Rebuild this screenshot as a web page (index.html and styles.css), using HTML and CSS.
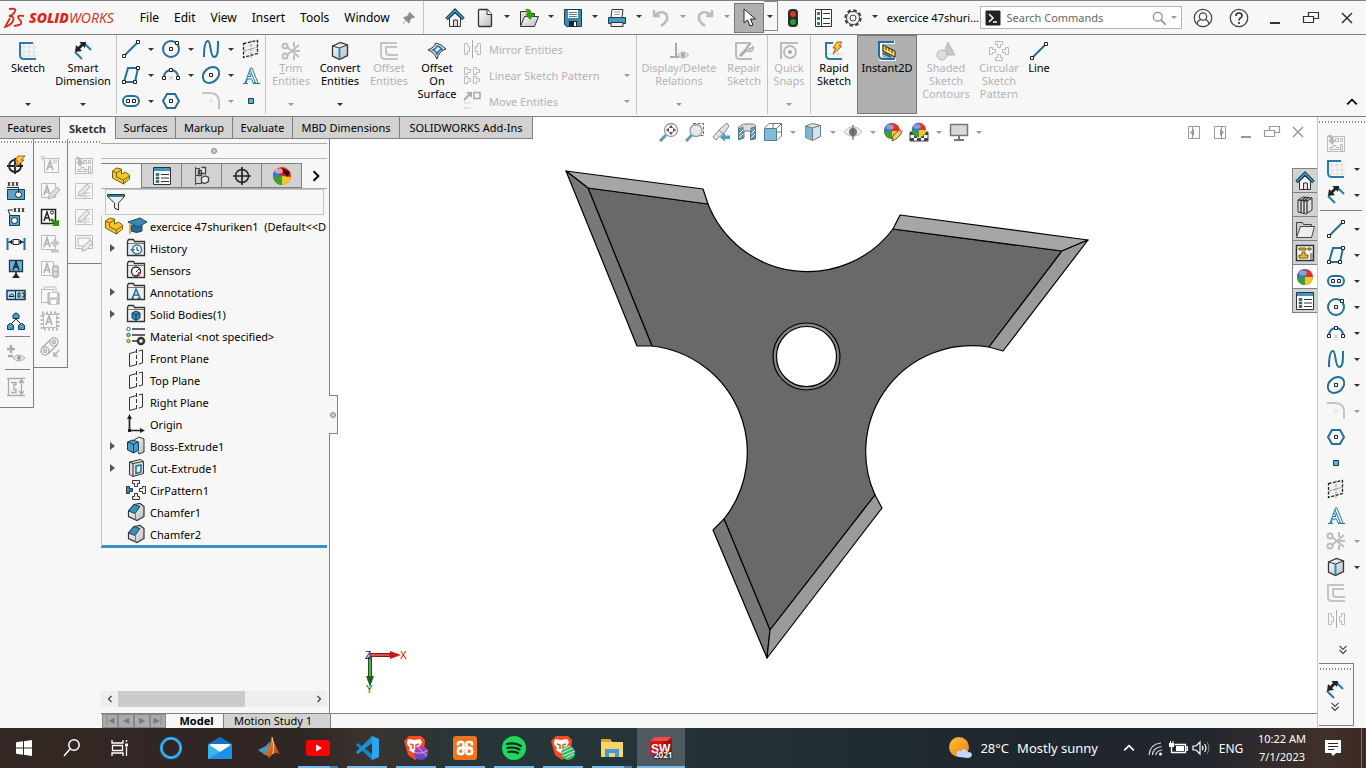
FILE: index.html
```html
<!DOCTYPE html>
<html lang="en">
<head>
<meta charset="utf-8">
<title>exercice 47shuriken1 - SOLIDWORKS</title>
<link rel="stylesheet" href="styles.css">
</head>
<body>
<svg class="defs" aria-hidden="true">
<defs>
<linearGradient id="g-blue" x1="0" y1="0" x2="1" y2="1"><stop offset="0" stop-color="#a5d5ea"/><stop offset="1" stop-color="#1d6791"/></linearGradient>
<linearGradient id="g-grey" x1="0" y1="0" x2="1" y2="1"><stop offset="0" stop-color="#fff"/><stop offset="1" stop-color="#bbb"/></linearGradient>
<linearGradient id="g-violet" x1="0" y1="0" x2="0" y2="1"><stop offset="0" stop-color="#c538a8"/><stop offset="1" stop-color="#4b4bd8"/></linearGradient>
<linearGradient id="g-mat" x1="0" y1="0" x2="1" y2="1"><stop offset="0" stop-color="#f6a33c"/><stop offset="1" stop-color="#b5300e"/></linearGradient>
<linearGradient id="g-sun" x1="0" y1="0" x2="1" y2="1"><stop offset="0" stop-color="#fbc62f"/><stop offset="1" stop-color="#ee7a1a"/></linearGradient>
</defs>
<symbol id="sketch" viewBox="0 0 20 20"><path d="M6 2v14M11 2v14M16 2v14M2 6h17M2 11h17M2 15h17" stroke="#ddd" fill="none"/><path d="M15 2H2v12q0 4 4 4h12" fill="none" stroke="#2b7ba6" stroke-width="2"/></symbol>
<symbol id="dim" viewBox="0 0 20 20"><path d="M11 2l7 7M2 11l7 7" stroke="#2b7ba6" stroke-width="2"/><path d="M2 11l1-7 2 2 3-3-1.500-2L13 1l-1 6-2-2-3 3 2 2z" fill="#222"/></symbol>
<symbol id="line" viewBox="0 0 20 20"><path d="M3 17L17 3" stroke="#226f9a" stroke-width="2"/><path d="M1.500 15.500h3v3h-3zM15.500 1.500h3v3h-3z" fill="#fff" stroke="#222"/></symbol>
<symbol id="circle" viewBox="0 0 20 20"><circle cx="10" cy="10" r="8" fill="none" stroke="#226f9a" stroke-width="2"/><path d="M8.500 8.500h3v3h-3zM14.500 2.500h3v3h-3z" fill="#fff" stroke="#222"/></symbol>
<symbol id="spline" viewBox="0 0 20 20"><path d="M3 18C3 8 4 2 7 2s2 16 6 16 4-6 4-16" fill="none" stroke="#226f9a" stroke-width="2"/></symbol>
<symbol id="plane" viewBox="0 0 20 20"><path d="M3 4l14-3v14l-14 4z" fill="#eee"/><path d="M2.500 4.500l14-3v13l-14 4z" fill="none" stroke="#222" stroke-width="1.300" stroke-dasharray="3 1.500"/><path d="M10 1v18M3 12l14-4" stroke="#999" stroke-dasharray="3 1"/></symbol>
<symbol id="rect" viewBox="0 0 20 20"><path d="M3 17h11l3-14H7z" fill="none" stroke="#226f9a" stroke-width="2"/><path d="M1.500 15.500h3v3h-3zM12.500 15.500h3v3h-3zM15.500 1.500h3v3h-3z" fill="#fff" stroke="#222"/></symbol>
<symbol id="arc" viewBox="0 0 20 20"><path d="M3 12a7 7 0 0 1 14 0" fill="none" stroke="#226f9a" stroke-width="2"/><path d="M1.500 11.500h3v3h-3zM15.500 11.500h3v3h-3zM8.500 3.500h3v3h-3z" fill="#fff" stroke="#222"/><path d="M8 11l4 4M12 11l-4 4" stroke="#ccc"/></symbol>
<symbol id="ellipse" viewBox="0 0 20 20"><ellipse cx="10" cy="10" rx="9" ry="7" transform="rotate(-40 10 10)" fill="none" stroke="#226f9a" stroke-width="2"/><path d="M8.500 8.500h3v3h-3z" fill="#fff" stroke="#222"/></symbol>
<symbol id="text" viewBox="0 0 20 20"><path d="M2 18.500h5M12 18.500h7M4 18L9.500 3h1.500l6 15M9 5l5.500 13h-2.300L10.500 14H6M7 11.500h3L8.500 8M4 18l1 0 1.500-4" fill="#eaf4f9" stroke="#2878a3"/></symbol>
<symbol id="slot" viewBox="0 0 20 20"><rect x="2" y="5" width="16" height="10" rx="5" fill="none" stroke="#226f9a" stroke-width="2"/><path d="M5.500 8.500h3v3h-3zM11.500 8.500h3v3h-3z" fill="#fff" stroke="#222"/></symbol>
<symbol id="hex" viewBox="0 0 20 20"><path d="M6 3h8l4 7-4 7H6l-4-7z" fill="none" stroke="#226f9a" stroke-width="2"/><path d="M8.500 8.500h3v3h-3z" fill="#fff" stroke="#222"/></symbol>
<symbol id="fillet" viewBox="0 0 20 20"><path d="M1 2h8q9 0 9 9v7" fill="none" stroke="#c4c4c4" stroke-width="2"/><path d="M8 8l4 4M12 8l-4 4" stroke="#ddd"/></symbol>
<symbol id="point" viewBox="0 0 20 20"><path d="M7.500 7.500h5v5h-5z" fill="#5eadd2" stroke="#123f58"/></symbol>
<symbol id="trim" viewBox="0 0 20 20"><g fill="none" stroke="#bdbdbd" stroke-width="2"><circle cx="4" cy="5" r="2.500"/><circle cx="4" cy="15" r="2.500"/><path d="M6 6l12 10M6 14l12-10M13 1v5M13 14v5M12 10h7"/></g></symbol>
<symbol id="cube" viewBox="0 0 20 20"><path d="M2.500 5l8-3.500 7 2.500v10.500l-8 4-7-3.500z" fill="url(#g-grey)" stroke="#333" stroke-width="1.300"/><path d="M2.500 5l7 2 8-3" fill="none" stroke="#333"/><path d="M9.500 7v11" stroke="#2b8abd" stroke-width="2"/></symbol>
<symbol id="offset" viewBox="0 0 20 20"><path d="M18 2H2v12q0 4 4 4h13M18 6H7v5q0 3 3 3h9" fill="none" stroke="#c4c4c4" stroke-width="2"/></symbol>
<symbol id="surf" viewBox="0 0 20 20"><path d="M1 9q6-2 8-7 5 1 10 6-7 2-9 10-3-7-9-9z" fill="#ddd" stroke="#333"/><path d="M6 9q3-1 4-4 2 0 5 3-3 1-5 5-1-3-4-4z" fill="#d5ebf5" stroke="#226f9a" stroke-width="1.500"/></symbol>
<symbol id="mirror" viewBox="0 0 20 20"><path d="M10.500 1v18" stroke="#aaa"/><path d="M2.500 4.500h3v3h2v5h-2v3h-3zM18.500 4.500h-3v3h-2v5h2v3h3z" fill="none" stroke="#bbb"/></symbol>
<symbol id="lpat" viewBox="0 0 20 20"><path d="M2.500 2.500h3v2h3v3h-3v2h-3zM11.500 2.500h3v2h3v3h-3v2h-3zM2.500 11.500h3v2h3v3h-3v2h-3zM11.500 11.500h3v2h3v3h-3v2h-3z" fill="none" stroke="#bbb"/></symbol>
<symbol id="move" viewBox="0 0 20 20"><path d="M2 9l6-6" stroke="#aaa" stroke-width="2"/><path d="M4 1h6v6z" fill="#aaa"/><path d="M12 1.500h6v6h-6z" fill="none" stroke="#aaa" stroke-width="1.500"/><path d="M2 12h7M2 17h7" stroke="#ddd" stroke-width="2" stroke-dasharray="2 1"/></symbol>
<symbol id="rel" viewBox="0 0 20 20"><path d="M7 2v14M1 16h9" stroke="#aaa" stroke-width="2"/><path d="M9 14q5-6 10.500 0-6 6-10.500 0z" fill="#eee" stroke="#aaa"/><circle cx="14" cy="14" r="2.300" fill="#aaa"/></symbol>
<symbol id="repair" viewBox="0 0 20 20"><path d="M17 2H2v12q0 4 4 4h12" fill="none" stroke="#bbb" stroke-width="2"/><path d="M6 15l7-7" stroke="#aaa" stroke-width="3"/><path d="M17 3l-3 3 2 2 3-3q2 5-3 6-4 0-4-4 1-4 5-4z" fill="#ccc" stroke="#aaa"/></symbol>
<symbol id="snap" viewBox="0 0 20 20"><path d="M1 2h18M2 2v16" stroke="#bbb" stroke-width="2"/><circle cx="11" cy="11" r="6" fill="none" stroke="#bbb" stroke-width="2"/><circle cx="11" cy="11" r="2" fill="#aaa"/></symbol>
<symbol id="rapid" viewBox="0 0 20 20"><path d="M10 4v14M14 8v8M4 13h15" stroke="#ddd"/><path d="M9 2H2v12q0 4 4 4h12" fill="none" stroke="#2b7ba6" stroke-width="2"/><path d="M13 1h5l-3 4h3l-9 8 3-6H9z" fill="#ffc83d" stroke="#b35b12"/></symbol>
<symbol id="instant" viewBox="0 0 20 20"><path d="M18 1H3v14q0 4 4 4h12" fill="none" stroke="#fff" stroke-width="4"/><path d="M17 1H2v13q0 4 4 4h12" fill="none" stroke="#226f9a" stroke-width="2"/><path d="M6 4l12 6v6L6 10z" fill="#ffd84a" stroke="#222"/><path d="M9 6v3M12 7v3M15 9v3" stroke="#222"/><path d="M6 12l8 4" stroke="#226f9a" stroke-width="2"/></symbol>
<symbol id="shaded" viewBox="0 0 20 20"><path d="M12 1l7 13H7z" fill="#c8c8c8" stroke="#bbb"/><circle cx="6" cy="14" r="5" fill="#ddd" stroke="#bbb"/></symbol>
<symbol id="cpat" viewBox="0 0 20 20"><path d="M6.500.5h7v3h-2v3h-3v-3h-2zM6.500 19.500h7v-3h-2v-3h-3v3h-2zM.5 6.500v7h3v-2h3v-3h-3v-2zM19.500 6.500v7h-3v-2h-3v-3h3v-2z" fill="none" stroke="#bbb"/></symbol>
<symbol id="cpatc" viewBox="0 0 20 20"><g fill="#eee" stroke="#333"><path d="M6.500.5h7v3h-2v3h-3v-3h-2zM6.500 19.500h7v-3h-2v-3h-3v3h-2zM19.500 6.500v7h-3v-2h-3v-3h3v-2z"/><path d="M.5 6.500v7h3v-2h3v-3h-3v-2z" fill="#2b8abd"/></g></symbol>
<symbol id="home" viewBox="0 0 20 20"><path d="M4.500 10v8.500h11V10L10 5z" fill="#f5f5f5" stroke="#333"/><path d="M8.500 18v-6h4v6" fill="#ddd" stroke="#333"/><path d="M1.500 11L10 2.500l8.500 8.500" fill="none" stroke="#173f55" stroke-width="3.500"/><path d="M2 10.500L10 2.500l8 8" fill="none" stroke="#4a9cc2" stroke-width="1.500"/></symbol>
<symbol id="new" viewBox="0 0 20 20"><path d="M3.500 2.500q0-1 1-1h8l4 5v11q0 1-1 1h-11q-1 0-1-1z" fill="url(#g-grey)" stroke="#333" stroke-width="1.300"/><path d="M12 1.500v5h5" fill="#fff" stroke="#333"/></symbol>
<symbol id="open" viewBox="0 0 20 20"><path d="M1.500 17.500v-14h6l1 2h7v3" fill="#ddd" stroke="#333"/><path d="M1.500 18.500l4-10h14l-4 10z" fill="url(#g-grey)" stroke="#333"/><path d="M6 1q6-1 7 5h3l-5 6-5-6h3q0-3-3-5z" fill="#3d9a0f"/></symbol>
<symbol id="save" viewBox="0 0 20 20"><path d="M1.500 1.500h17v17h-15l-2-2z" fill="#3b89b2" stroke="#173f55"/><path d="M5 2h10v8H5z" fill="#fff"/><path d="M6 4.500h8M6 6.500h8M6 8.500h8" stroke="#777"/><path d="M6 13h8v6H6z" fill="#222"/><path d="M11 14h2v4h-2z" fill="#fff"/></symbol>
<symbol id="print" viewBox="0 0 20 20"><path d="M5 1.500h11l-1 8H4z" fill="#fff" stroke="#333"/><path d="M1.500 9.500h17v6h-17z" fill="#4698c0" stroke="#173f55"/><path d="M4 14.500h12v4H4z" fill="#eee" stroke="#333"/><path d="M7 4h6M7 6.500h6" stroke="#999"/></symbol>
<symbol id="undo" viewBox="0 0 20 20"><path d="M3 2v6h6M4 7q6-5 11-1 4 6-5 12" fill="none" stroke="#bbb" stroke-width="2.500"/></symbol>
<symbol id="redo" viewBox="0 0 20 20"><path d="M17 2v6h-6M16 7q-6-5-11-1-4 6 5 12" fill="none" stroke="#bbb" stroke-width="2.500"/></symbol>
<symbol id="cursor" viewBox="0 0 20 20"><path d="M5 1v14l3.500-3L11 18l3-1-2.500-6h5z" fill="#fff" stroke="#222"/></symbol>
<symbol id="traffic" viewBox="0 0 20 20"><rect x="5" y="1" width="10" height="18" rx="4" fill="#2a2a2a"/><circle cx="10" cy="6" r="3" fill="#d33a22"/><circle cx="10" cy="14" r="3" fill="#2c9a2c"/></symbol>
<symbol id="opts" viewBox="0 0 20 20"><path d="M2.500 1.500h16v17h-16z" fill="#fff" stroke="#333"/><path d="M8.500 2v16" stroke="#333"/><path d="M4 4h3v3H4zM4 9h3v3H4zM4 14h3v3H4z" fill="#2b7ba6"/><path d="M10 5.500h7M10 10.500h7M10 15.500h7" stroke="#333"/></symbol>
<symbol id="gear" viewBox="0 0 20 20"><circle cx="10" cy="10" r="7.500" fill="none" stroke="#444" stroke-width="2.500" stroke-dasharray="3.500 2.390"/><circle cx="10" cy="10" r="6.500" fill="#f7f7f7" stroke="#444"/><circle cx="10" cy="10" r="3" fill="none" stroke="#444"/></symbol>
<symbol id="pin" viewBox="0 0 20 20"><path d="M11 3l6 6-2 1-1-.5-3 3q0 3-1 4l-7-7q2-1 4-1l3-3-.5-1zM6 13l-4 5" fill="#8a8a8a" stroke="#8a8a8a"/></symbol>
<symbol id="prompt" viewBox="0 0 20 20"><path d="M3 3h14v14H3z" fill="#222" stroke="#222"/><path d="M6 6l4 4-4 4M10 14h4" fill="none" stroke="#fff" stroke-width="1.500"/></symbol>
<symbol id="search" viewBox="0 0 20 20"><circle cx="8.500" cy="8.500" r="5.500" fill="none" stroke="currentColor" stroke-width="1.500"/><path d="M12.500 12.500l6 6" stroke="currentColor" stroke-width="2"/></symbol>
<symbol id="user" viewBox="0 0 20 20"><g fill="none" stroke="#444" stroke-width="1.200"><circle cx="10" cy="10" r="8.700"/><circle cx="10" cy="8.500" r="3.700"/><path d="M4 16q1-4 4-4.300M16 16q-1-4-4-4.300"/></g></symbol>
<symbol id="help" viewBox="0 0 20 20"><circle cx="10" cy="10" r="8.700" fill="none" stroke="#444" stroke-width="1.300"/><path d="M7 8q0-3 3-3t3 2.700q0 1.500-1.700 2.400Q10 11 10 12.500M10 14v2" fill="none" stroke="#333" stroke-width="1.700"/></symbol>
<symbol id="min" viewBox="0 0 20 20"><path d="M5 15h10" stroke="currentColor" stroke-width="2"/></symbol>
<symbol id="restore" viewBox="0 0 20 20"><path d="M7.500 8V4.500h10v6H13M2.500 8.500h10v6h-10z" fill="none" stroke="currentColor" stroke-width="1.200"/></symbol>
<symbol id="close" viewBox="0 0 20 20"><path d="M5 5l10 10M15 5L5 15" stroke="currentColor" stroke-width="1.500"/></symbol>
<symbol id="pl" viewBox="0 0 20 20"><path d="M4.500 4.500h11v12h-11zM8.500 5v11" fill="none" stroke="#999"/><path d="M10 7v7l-4-3.500z" fill="#999"/></symbol>
<symbol id="pr" viewBox="0 0 20 20"><path d="M4.500 4.500h11v12h-11zM11.500 5v11" fill="none" stroke="#999"/><path d="M10 7v7l4-3.500z" fill="#999"/></symbol>
<symbol id="zoomfit" viewBox="0 0 20 20"><path d="M7 13l-6 6" stroke="#5c9dbf" stroke-width="3"/><circle cx="12" cy="8" r="6.500" fill="#fff" stroke="#999" stroke-width="1.300"/><path d="M12 3.500l1.500 2h-3zM12 12.500l1.500-2h-3zM7.500 8l2-1.500v3zM16.500 8l-2-1.500v3z" fill="#555" stroke="#555"/></symbol>
<symbol id="zoomarea" viewBox="0 0 20 20"><path d="M8 1.500h10.500v12H9" fill="none" stroke="#666" stroke-dasharray="3 1.500"/><path d="M7 13l-6 6" stroke="#5c9dbf" stroke-width="3"/><circle cx="11" cy="8.500" r="6" fill="#e3e9eb" stroke="#999" stroke-width="1.300"/></symbol>
<symbol id="prev" viewBox="0 0 20 20"><path d="M2 15l8-9 6-5 2 3-4 6-9 8z" fill="#e2e2e2" stroke="#888"/><path d="M8 8l4 4" stroke="#888"/><path d="M19 13.500h-5V11l-5 4.500 5 4V17h5z" fill="#4f9cc4"/></symbol>
<symbol id="section" viewBox="0 0 20 20"><path d="M1.500 5l5-3h10l2 2v13l-5 1V9H7v7l-5.500 2z" fill="#ddd" stroke="#777"/><path d="M2 7l4-2v11l-4 1zM14 6l4-1v11l-4 1z" fill="#5da4c6" stroke="#50788c"/><path d="M2 12l4-4M2 16l4-4M14 12l4-4M14 16l4-4" stroke="#fff"/></symbol>
<symbol id="orient" viewBox="0 0 20 20"><path d="M6 1.500h12.500V14L14 18.500M1.500 6L6 1.500M14 6l4.500-4.500M10 2v12M6 10h12" fill="none" stroke="#777"/><path d="M1.500 6.500h12v12h-12z" fill="#83bbd6" stroke="#4e7f99"/></symbol>
<symbol id="style" viewBox="0 0 20 20"><path d="M2.500 4l7-2.500 8 2v11l-8 4-7-3z" fill="#cbe6f1" stroke="#777"/><path d="M2.500 4l7 2v12l-7-3z" fill="#79b6d3"/><path d="M2.500 4l7 2 8-2.500M9.500 6v12" fill="none" stroke="#777"/></symbol>
<symbol id="eye" viewBox="0 0 20 20"><path d="M1 10q9-11 18 0-9 9-18 0z" fill="#eee" stroke="#bbb"/><circle cx="10" cy="10" r="4" fill="#777"/><path d="M10 3v15" stroke="#555"/></symbol>
<symbol id="ball" viewBox="0 0 20 20"><circle cx="10" cy="10" r="8" fill="#d9362b"/><path d="M10 10L10 2A8 8 0 0 0 2 11z" fill="#3a78c9"/><path d="M10 10l-8 1a8 8 0 0 0 8 7z" fill="#35a336"/><path d="M10 10v8a8 8 0 0 0 8-8z" fill="#f1c52f"/><ellipse cx="8" cy="6" rx="4" ry="2.500" fill="#fff" opacity=".35"/></symbol>
<symbol id="disp" viewBox="0 0 20 20"><circle cx="10" cy="10" r="9" fill="#e2231f"/><path d="M10 10L3 4a9 9 0 0 0-2 7z" fill="#3a78c9"/><path d="M10 10l-9 1a9 9 0 0 0 9 8z" fill="#35a336"/><path d="M10 10v9a9 9 0 0 0 9-8z" fill="#f1c52f"/><path d="M10 2l8 4-2 5-5-4z" fill="#301010"/><ellipse cx="7" cy="5" rx="4" ry="2.500" fill="#fff" opacity=".55"/></symbol>
<symbol id="appear" viewBox="0 0 20 20"><use href="#ball" x="-1" y="-1" width="20" height="20"/><path d="M9 19l1-5 6-6 3 3-6 6z" fill="#f0d265" stroke="#6a5522"/><path d="M15 9l2-2 3 2-2 3z" fill="#e9838a"/></symbol>
<symbol id="scene" viewBox="0 0 20 20"><path d="M1 10h18v9H1z" fill="#fff" stroke="#444"/><path d="M1 10h4v3H1zM15 10h4v3h-4zM5 13h3v3H5zM12 13h3v3h-3zM1 16h4v3H1zM8 16h4v3H8zM15 16h4v3h-4z" fill="#444"/><use href="#ball" y="-1" width="20" height="18"/></symbol>
<symbol id="monitor" viewBox="0 0 20 20"><path d="M1.500 2.500h17v11h-17z" fill="#d8d8d8" stroke="#777" stroke-width="1.500"/><path d="M10 14v4M5 18h10" stroke="#777" stroke-width="2"/></symbol>
<symbol id="part" viewBox="0 0 20 20"><path d="M1.500 5l4-3 5 1v5l4-2 4 3v4l-6 5-11-6z" fill="#f2c62f" stroke="#7a5d10"/><path d="M1.500 5l4 2 5-3M5.500 7v4l7 3 6-4M12.500 14v4" fill="none" stroke="#7a5d10"/></symbol>
<symbol id="props" viewBox="0 0 20 20"><path d="M1.500 1.500h17v17h-17z" fill="#fff" stroke="#333"/><path d="M2 2h16v3H2z" fill="#3e97c2"/><path d="M4 7.500h3v2H4zM4 11h3v2H4zM4 14.500h3v2H4z" fill="#2b7ba6" stroke="#333" stroke-width=".5"/><path d="M9 8.500h8M9 12h8M9 15.500h8" stroke="#333"/></symbol>
<symbol id="config" viewBox="0 0 20 20"><path d="M3.500 1v18M3 2.500h7M3 17.500h7M4 9.500h5" fill="none" stroke="#444"/><path d="M9.500 1.500h4v6h-6v-5M9.500 11.500l4-1.500 3 1.500v4l-4 2-3-1.500zM6.500 4.500h3v5h-3z" fill="#eee" stroke="#444" stroke-width="1.300"/></symbol>
<symbol id="target" viewBox="0 0 20 20"><circle cx="10" cy="10" r="6.500" fill="none" stroke="#222" stroke-width="1.500"/><path d="M10 1v18M1 10h18" stroke="#222" stroke-width="1.700"/></symbol>
<symbol id="filter" viewBox="0 0 20 20"><path d="M1.500 2.500h17v2l-6 6.500v7l-4-2v-5l-7-6.500z" fill="#eee" stroke="#333"/><path d="M2 3h16v2H2z" fill="#2b7ba6"/></symbol>
<symbol id="grad" viewBox="0 0 20 20"><path d="M4 9v6q6 3 11 0V9" fill="#266b92" stroke="#1c4d69"/><path d="M1 6l12-4 7 4-9 5z" fill="#3988b1" stroke="#1c4d69"/><path d="M3 7v11" stroke="#e09a20" stroke-width="1.500"/></symbol>
<symbol id="folder" viewBox="0 0 20 20"><path d="M1.500 17.500v-14l1-2h5l1 2h10v14z" fill="#eee" stroke="#333" stroke-width="1.300"/><path d="M2 5.500h16" stroke="#777"/></symbol>
<symbol id="hist" viewBox="0 0 20 20"><use href="#folder"/><circle cx="11" cy="11.500" r="4.500" fill="#fff" stroke="#2b7ba6" stroke-width="1.500"/><path d="M11 9v3l2 1" fill="none" stroke="#222"/><path d="M4 11h5l-2.500 3z" fill="#2b7ba6"/></symbol>
<symbol id="sensor" viewBox="0 0 20 20"><use href="#folder"/><circle cx="10" cy="11.500" r="4.500" fill="#fff" stroke="#222" stroke-width="1.300"/><path d="M10 12l3-3" stroke="#222"/><path d="M12 12h2v3h-3z" fill="#e04a20"/></symbol>
<symbol id="annot" viewBox="0 0 20 20"><use href="#folder"/><path d="M5 16.500h3M11 16.500h4M6.500 16l3.500-9 4 9M8 13h4.500" fill="none" stroke="#226f9a" stroke-width="1.500"/></symbol>
<symbol id="solid" viewBox="0 0 20 20"><use href="#folder"/><path d="M6 9l4-2 4 2v5l-4 2.500L6 14z" fill="#2b8abd" stroke="#173f55"/><path d="M6 9l4 2 4-2M10 11v5" fill="none" stroke="#173f55"/></symbol>
<symbol id="mat" viewBox="0 0 20 20"><path d="M6 3h13M6 9h13M6 15h5" stroke="#333" stroke-width="1.500"/><circle cx="2.500" cy="3" r="1.700" fill="#fff" stroke="#555"/><circle cx="2.500" cy="9" r="1.700" fill="#7cc4e4" stroke="#226f9a"/><circle cx="2.500" cy="15" r="1.700" fill="#f0c020" stroke="#a07b10"/><circle cx="15" cy="15" r="3" fill="#fff" stroke="#333" stroke-width="2.500"/></symbol>
<symbol id="fplane" viewBox="0 0 20 20"><path d="M7 4.500l-3.500 1v13l3.500-1M13 3l3.500-1v13L13 16" fill="none" stroke="#333"/><path d="M10.500 1v18M7 4.500l6-1.500M7 17.500l6-1.500" stroke="#333" stroke-dasharray="4 2"/></symbol>
<symbol id="origin" viewBox="0 0 20 20"><path d="M3.500 3v13.500H16" fill="none" stroke="#222" stroke-width="1.700"/><path d="M3.500 0l2.500 5H1zM19 16.500l-5 2.500v-5zM2 15h3v3H2z" fill="#222"/></symbol>
<symbol id="boss" viewBox="0 0 20 20"><path d="M8 4l5-3 5 2v13l-5 2z" fill="url(#g-grey)" stroke="#333"/><path d="M1.500 6l5-2 6 2v8l-5 3-6-3z" fill="#4b9dc5" stroke="#173f55"/><path d="M1.500 6l6 2.500L12 6M7.500 8.500V17" fill="none" stroke="#173f55"/></symbol>
<symbol id="cut" viewBox="0 0 20 20"><path d="M3.500 4l11-2.500 3 2v12L7 18.500l-3.500-2z" fill="#ddd" stroke="#333"/><path d="M3.500 4L7 5.500l10.500-2M7 18V5.500" fill="none" stroke="#333"/><path d="M10 8l5-1v7l-5 1.500z" fill="#dff0f7" stroke="#226f9a" stroke-width="1.500"/></symbol>
<symbol id="chamfer" viewBox="0 0 20 20"><path d="M2.500 9L8 2.500l6-1 4 3v10l-7 4-8.500-4z" fill="url(#g-grey)" stroke="#333" stroke-width="1.200"/><path d="M2.500 9L8 2.500l6 2-5 7z" fill="#3d8fb8" stroke="#173f55"/><path d="M9.500 11.500V18" stroke="#777"/></symbol>
<symbol id="lib" viewBox="0 0 20 20"><path d="M3 5l5-3 9 1v12l-6 4-8-2z" fill="#ddd" stroke="#333"/><path d="M6 18V6l5-4M9 18V6l5-4M12 18V6l5-3M3 5l9 1" fill="none" stroke="#333" stroke-width="1.300"/></symbol>
<symbol id="fold2" viewBox="0 0 20 20"><path d="M1.500 17.500v-14h6l1 2h8v3" fill="#ccc" stroke="#444"/><path d="M1.500 18.500l4-11h14l-3 11z" fill="#eee" stroke="#444"/></symbol>
<symbol id="palette" viewBox="0 0 20 20"><path d="M1.500 2.500h17v15h-17z" fill="#fff" stroke="#333" stroke-width="1.500"/><path d="M4 5h7v2H4zM13 5h3v2h-3zM7 9h3v3h3v3H4v-3h3z" fill="#f2c01d" stroke="#6d540a"/><path d="M15 10h3v7h-3z" fill="#999"/></symbol>
<symbol id="tmpl" viewBox="0 0 20 20"><path d="M1.500 3.500h17v15h-17z" fill="none" stroke="#bbb"/><path d="M2 2q5-1 6 5h2l-4 5-4-5h2q0-3-2-5z" fill="#bbb"/><path d="M9.500 5.500h3v3h-3zM14.500 5.500h2v3h-2zM4 16.500v-2h3v-2h3v2h3v2zM14.500 11.500h2v6h-2z" fill="none" stroke="#bbb"/></symbol>
<symbol id="t1" viewBox="0 0 20 20"><circle cx="9" cy="11" r="6" fill="none" stroke="#222" stroke-width="1.800"/><path d="M9 3v16M1 11h16" stroke="#222" stroke-width="1.800"/><path d="M12 1h7l-4 4h3l-9 7 3-6H9z" fill="#ffc83d" stroke="#b35b12"/></symbol>
<symbol id="t2" viewBox="0 0 20 20"><path d="M1.500 8.500h17v10h-17z" fill="#5aa6cb" stroke="#123f58"/><circle cx="12.500" cy="13.500" r="3" fill="#fff" stroke="#222"/><path d="M2 1l2 4M4 1L2 5M6 1l2 4M8 1L6 5M10 1l2 4M12 1l-2 4M1 6.500h11.500V12" fill="none" stroke="#222"/></symbol>
<symbol id="t3" viewBox="0 0 20 20"><path d="M3.500 8.500h10v10h-10z" fill="#5aa6cb" stroke="#123f58"/><circle cx="8.500" cy="13.500" r="3" fill="#fff" stroke="#222"/><path d="M8 1l2 4M10 1L8 5M12 1l2 4M14 1l-2 4M16 1l2 4M18 1l-2 4M2 3h5M2 3l2 5" stroke="#222" fill="none"/></symbol>
<symbol id="t4" viewBox="0 0 20 20"><path d="M1.500 5v12M18.500 5v12" stroke="#226f9a" stroke-width="2"/><path d="M2 9h16" stroke="#222"/><path d="M7 6.500h6v5H7z" fill="#fff" stroke="#222"/><path d="M3 9l3-2.500v5zM17 9l-3-2.500v5z" fill="#222"/></symbol>
<symbol id="t5" viewBox="0 0 20 20"><path d="M3.500 1.500h13v11h-13z" fill="#6bb3d6" stroke="#123f58" stroke-width="1.300"/><path d="M7 11l3-8 3 8M8 8h4M10 13v3" stroke="#222" stroke-width="1.500" fill="none"/><path d="M6 19l4-5 4 5z" fill="#222"/></symbol>
<symbol id="t6" viewBox="0 0 20 20"><path d="M1 5.500h18v9H1z" fill="#b7dcec" stroke="#123f58" stroke-width="1.500"/><path d="M9.500 6v8M3 11.500h5q-2-5-5 0zM12 8h2v4h-2zM16 8h2v4h-2" fill="none" stroke="#222"/></symbol>
<symbol id="t7" viewBox="0 0 20 20"><path d="M10 8L4 14M10 8l6 6M10 4v4" stroke="#222"/><g fill="#4b9dc5" stroke="#123f58"><path d="M7 7.500V4q3-4 6 0v3.500zM1.500 18.500v-4q3-4 6 0v4zM12.500 18.500v-4q3-4 6 0v4z"/></g></symbol>
<symbol id="t8" viewBox="0 0 20 20"><path d="M5 1v8M1 5h8M2 12h5" stroke="#aaa" stroke-width="2.500"/><path d="M7 14q6-6 12 0-6 6-12 0z" fill="#eee" stroke="#aaa"/><circle cx="13" cy="14" r="2" fill="#999"/></symbol>
<symbol id="t9" viewBox="0 0 20 20"><path d="M1 1.500h18M1 18.500h18M2.500 2v16M5 5.500h5v2H8v5h2v3H5M15.500 3v14M13 6l2.500-3L18 6M13 14l2.500 3 2.500-3" fill="none" stroke="#aaa" stroke-width="1.300"/></symbol>
<symbol id="note" viewBox="0 0 20 20"><path d="M4.500 3.500h14v14h-14z" fill="none" stroke="#bbb"/><path d="M7 15l3-9 3 9M8 12h4" fill="none" stroke="#b3b3b3" stroke-width="1.700"/><circle cx="15" cy="6.500" r="1.500" fill="none" stroke="#bbb"/><path d="M3 .5v5M.5 3h5M1 1l4 4M5 1L1 5" stroke="#ccc"/></symbol>
<symbol id="notea" viewBox="0 0 20 20"><path d="M1.500 2.500h14v14h-14z" fill="#fff" stroke="#222" stroke-width="1.500"/><path d="M4 14l3-9 3 9M5 11h4" fill="none" stroke="#222" stroke-width="1.500"/><circle cx="12" cy="5.500" r="1.500" fill="none" stroke="#222"/><path d="M12 11l3 3 4-1v6h-7l2-2-4-4z" fill="#35910c"/></symbol>
<symbol id="noteb" viewBox="0 0 20 20"><path d="M1.500 2.500h14v14h-14z" fill="none" stroke="#bbb"/><path d="M4 14l3-9 3 9M5 11h4" fill="none" stroke="#b3b3b3" stroke-width="1.700"/><path d="M8 18l1-4 8-8 3 3-8 8z" fill="#ddd" stroke="#b3b3b3"/></symbol>
<symbol id="notec" viewBox="0 0 20 20"><path d="M1.500 2.500h14v14h-14z" fill="none" stroke="#bbb"/><path d="M4 14l3-9 3 9M5 11h4" fill="none" stroke="#b3b3b3" stroke-width="1.700"/><path d="M15 6v8M11 10h8M11 18h8" stroke="#c4c4c4" stroke-width="3"/></symbol>
<symbol id="noted" viewBox="0 0 20 20"><path d="M1.500 2.500h12v14h-12z" fill="none" stroke="#bbb"/><path d="M4 14l3-9 3 9M5 11h4" fill="none" stroke="#b3b3b3" stroke-width="1.700"/><rect x="12" y="6" width="7" height="13" rx="3" fill="#bbb"/><circle cx="15.500" cy="10" r="2" fill="#ddd"/><circle cx="15.500" cy="15" r="2" fill="#ddd"/></symbol>
<symbol id="notee" viewBox="0 0 20 20"><path d="M1.500 4.500h12v13h-12zM4 4V2h12v6" fill="none" stroke="#bbb"/><path d="M8 8h11v11H8z" fill="#ccc" stroke="#aaa"/><path d="M10 8h7v4h-7zM11 15h5v4h-5z" fill="#fff"/></symbol>
<symbol id="notef" viewBox="0 0 20 20"><path d="M2 2h16v16H2z" fill="none" stroke="#bbb" stroke-width="3" stroke-dasharray="2 2"/><path d="M3.500 3.500h13v13h-13z" fill="#f7f7f7" stroke="#bbb"/><path d="M6 14l3-9 3 9M7 11h4" fill="none" stroke="#b3b3b3" stroke-width="1.700"/></symbol>
<symbol id="belt" viewBox="0 0 20 20"><g fill="none" stroke="#b3b3b3" stroke-width="1.500"><circle cx="5" cy="14" r="4"/><circle cx="5" cy="14" r="1.500"/><circle cx="14" cy="5" r="4"/><circle cx="14" cy="5" r="1.500"/><path d="M2 11l9-9M8 17l9-9M19 13l-5 6M14 15v4h4"/></g></symbol>
<symbol id="tbl" viewBox="0 0 20 20"><path d="M1.500 2.500h17v15h-17zM6 12h10M6 15h10M11 9v8" fill="none" stroke="#c4c4c4"/><path d="M4 15l1-4 8-8 3 3-8 8z" fill="#e6e6e6" stroke="#b3b3b3"/></symbol>
<symbol id="tbl2" viewBox="0 0 20 20"><path d="M1.500 2.500h17v13h-17zM4 5h12v8H4z" fill="none" stroke="#bbb"/><path d="M8 18l1-4 7-7 3 3-7 7z" fill="#e6e6e6" stroke="#b3b3b3"/></symbol>
<symbol id="chev" viewBox="0 0 20 20"><path d="M5 4l5 5 5-5M5 10l5 5 5-5" fill="none" stroke="#445" stroke-width="1.700"/></symbol>
<symbol id="up" viewBox="0 0 20 20"><path d="M4 13l6-6 6 6" fill="none" stroke="currentColor" stroke-width="2"/></symbol>
<symbol id="right" viewBox="0 0 20 20"><path d="M7 4l6 6-6 6" fill="none" stroke="currentColor" stroke-width="2.500"/></symbol>
<symbol id="left" viewBox="0 0 20 20"><path d="M13 4l-6 6 6 6" fill="none" stroke="currentColor" stroke-width="2.500"/></symbol>
<symbol id="win" viewBox="0 0 24 24"><path d="M4 6.300L11 5.300V11.500H4zM12 5.200L20 4v7.500h-8zM4 12.500h7v6.200L4 17.700zM12 12.500h8V20l-8-1.200z" fill="#fff"/></symbol>
<symbol id="find" viewBox="0 0 24 24"><circle cx="14" cy="9" r="5.200" fill="none" stroke="#fff" stroke-width="1.500"/><path d="M10 13l-6 7" stroke="#fff" stroke-width="1.500"/></symbol>
<symbol id="tview" viewBox="0 0 24 24"><path d="M4 4v3h11V4M4 20v-3h11v3M4.500 9.500h10v5h-10zM18.500 4v2M18.500 11v9" fill="none" stroke="#fff" stroke-width="1.300"/><path d="M17 7.500h3v3h-3z" fill="#fff"/></symbol>
<symbol id="cortana" viewBox="0 0 24 24"><circle cx="12" cy="12" r="9.700" fill="none" stroke="#1497e0" stroke-width="3"/><circle cx="12" cy="12" r="9.500" fill="none" stroke="#5ccbfa"/></symbol>
<symbol id="mail" viewBox="0 0 24 24"><path d="M0 8l12-7 12 7v15H0z" fill="#1174c8"/><path d="M2 8h20v9H2z" fill="#fff"/><path d="M0 8l12 8L24 8v15H0z" fill="#37b4f0"/><path d="M0 23L24 9v14z" fill="#1e93e6"/></symbol>
<symbol id="matlab" viewBox="0 0 24 24"><path d="M1 14l8-4 4-5-2 11-4 2z" fill="#4a96c8"/><path d="M6 19q5-2 9-18 4 11 8 17-4-2-7 0l-4 4q-2-4-6-3z" fill="url(#g-mat)"/><path d="M15 1q3 9 1 17" fill="none" stroke="#ffd08a"/></symbol>
<symbol id="yt" viewBox="0 0 24 24"><rect y="4" width="24" height="16" rx="3" fill="#f00"/><path d="M10 8.500v7l6-3.500z" fill="#fff"/></symbol>
<symbol id="vs" viewBox="0 0 24 24"><path d="M17 0l7 3v18l-7 3L1 9l2-2 14 11z" fill="#1684cb"/><path d="M1 16l16-16v7L3 18z" fill="#1c91dc"/><path d="M17 0l7 3v18l-7 3z" fill="#2ea4ec"/></symbol>
<symbol id="brave" viewBox="0 0 24 24"><path d="M5 0h12l4 4-1 13-9 7-7-5L0 5z" fill="#fb4a1e"/><path d="M3 5l2-2 5 1 6-1 2 3-3 6 1 2-5 4-6-4 1-2-3-4z" fill="#fff"/><path d="M6 8l3 1v4M15 8l-3 1v4" fill="none" stroke="#fb4a1e" stroke-width="1.500"/></symbol>
<symbol id="brave1" viewBox="0 0 24 24"><use href="#brave"/><circle cx="17" cy="17" r="7" fill="url(#g-violet)"/><path d="M10 16q8 3 14-2M14 11q4 5 9 9" fill="none" stroke="#e5a7e8"/></symbol>
<symbol id="brave2" viewBox="0 0 24 24"><use href="#brave"/><circle cx="17" cy="17" r="7" fill="#35b86b"/><path d="M11 14l8-4M11 17l11-5M12 20l12-5M15 22l8-4" stroke="#d9f3df"/></symbol>
<symbol id="xampp" viewBox="0 0 24 24"><rect width="24" height="24" rx="3" fill="#ee7420"/><g fill="none" stroke="#fff" stroke-width="2.500"><rect x="5" y="6" width="5.500" height="5.500" rx="2"/><rect x="13.500" y="6" width="5.500" height="5.500" rx="2"/><rect x="5" y="12.500" width="5.500" height="5.500" rx="2"/><rect x="13.500" y="12.500" width="5.500" height="5.500" rx="2"/><path d="M10 12h4"/></g><path d="M3 9.500h3.500v1.500H3zM17.500 9.500H21v1.500h-3.500z" fill="#ee7420"/></symbol>
<symbol id="spotify" viewBox="0 0 24 24"><circle cx="12" cy="12" r="12" fill="#1ed760"/><path d="M5 8q8-2 14 2M5.500 12q7-1.500 12 1.500M6.500 16q5-1 9.500 1" fill="none" stroke="#15271d" stroke-width="2.200" stroke-linecap="round"/></symbol>
<symbol id="files" viewBox="0 0 24 24"><path d="M1 3h9l2 3h11v15H1z" fill="#fbd667"/><path d="M1 3h9l1 3H1z" fill="#e5a21b"/><path d="M5 21v-8h14v8h-4v-4H9v4z" fill="#3e9be3"/></symbol>
<symbol id="sw" viewBox="0 0 24 24"><path d="M1 5l5-4h17v14l-5 4H1z" fill="#9f1015"/><path d="M1 5l5-4h17l-5 4z" fill="#f04a45"/><path d="M1 5h13v14H1z" fill="#c8161d"/><text x="2" y="17" class="swtxt">SW</text></symbol>
<symbol id="weather" viewBox="0 0 24 24"><circle cx="11" cy="11" r="10" fill="url(#g-sun)"/><path d="M11 21q-4-1-2-5 1-2 4-1 3-4 6 0l1 1q4 0 4 3-1 3-4 3z" fill="#c3d6fa"/></symbol>
<symbol id="wifi" viewBox="0 0 20 20"><path d="M4 17Q5 6 16 5M7.500 17q0-7 9-8.500M11 17q0-4 6-5" fill="none" stroke="#ddd" stroke-width="1.200"/><circle cx="15.500" cy="16" r="1.500" fill="#fff"/></symbol>
<symbol id="batt" viewBox="0 0 20 20"><path d="M6.500 6.500h11v8h-11M18 9h1.500v3H18M3.500 9v6M3 14.500h4" fill="none" stroke="#fff" stroke-width="1.300"/><path d="M8 8h8v5H8zM1 5h5v4H1zM2 3h1v2H2zM4.500 3h1v2h-1z" fill="#fff"/></symbol>
<symbol id="vol" viewBox="0 0 20 20"><path d="M2 8h3l4-4v12l-4-4H2zM11 8q2 2 0 4M13.500 6q3 4 0 8" fill="none" stroke="#fff" stroke-width="1.200"/><path d="M16 4q4 6 0 12" fill="none" stroke="#888"/></symbol>
<symbol id="action" viewBox="0 0 20 20"><path d="M2 2h16v13h-5l-3 3-2-3H2z" fill="#fff"/><path d="M5 5.500h10M5 8.500h10M5 11.500h6" stroke="#2b2726"/></symbol>
</svg>

<header class="titlebar">
  <div class="logo"><svg class="ds" viewBox="0 0 22 22" aria-hidden="true"><path d="M5 2q8-1 6 2-1 4-6 5 6 0 4 5-2 4-8 6l5-9M20 9q-6-1-6 1 0 1 2 3 3 4-1 5l-5 1" fill="none" stroke="#d9291c" stroke-width="1.800"/></svg><span><b>SOLID</b>WORKS</span></div>
  <nav class="menu"><button>File</button><button>Edit</button><button>View</button><button>Insert</button><button>Tools</button><button>Window</button></nav>
  <button class="pin" aria-label="Pin menu"><svg class="i16"><use href="#pin"/></svg></button>
  <div class="quick">
    <button class="qb" aria-label="Home"><svg class="i"><use href="#home"/></svg></button>
    <button class="qb" aria-label="New"><svg class="i"><use href="#new"/></svg></button><button class="dd" aria-label="New options"></button>
    <button class="qb" aria-label="Open"><svg class="i"><use href="#open"/></svg></button><button class="dd" aria-label="Open options"></button>
    <button class="qb" aria-label="Save"><svg class="i"><use href="#save"/></svg></button><button class="dd" aria-label="Save options"></button>
    <button class="qb" aria-label="Print"><svg class="i"><use href="#print"/></svg></button><button class="dd" aria-label="Print options"></button>
    <button class="qb" aria-label="Undo"><svg class="i"><use href="#undo"/></svg></button><button class="dd off" aria-label="Undo options"></button>
    <button class="qb" aria-label="Redo"><svg class="i"><use href="#redo"/></svg></button><button class="dd off" aria-label="Redo options"></button>
    <button class="qb picked" aria-label="Select"><svg class="i"><use href="#cursor"/></svg></button><button class="dd boxed" aria-label="Select options"></button>
    <button class="qb" aria-label="Rebuild"><svg class="i"><use href="#traffic"/></svg></button>
    <button class="qb" aria-label="File properties"><svg class="i"><use href="#opts"/></svg></button>
    <button class="qb" aria-label="Options"><svg class="i"><use href="#gear"/></svg></button><button class="dd" aria-label="Options menu"></button>
  </div>
  <span class="doc">exercice 47shuri...</span>
  <div class="searchbox"><svg class="i"><use href="#prompt"/></svg><input type="text" placeholder="Search Commands" aria-label="Search Commands"><svg class="i16 dim"><use href="#search"/></svg><button class="dd off" aria-label="Search scope"></button></div>
  <div class="winbtns"><button aria-label="User"><svg class="i"><use href="#user"/></svg></button><button aria-label="Help"><svg class="i"><use href="#help"/></svg></button><button aria-label="Minimize"><svg class="i"><use href="#min"/></svg></button><button aria-label="Restore"><svg class="i"><use href="#restore"/></svg></button><button aria-label="Close"><svg class="i"><use href="#close"/></svg></button></div>
</header>

<section class="ribbon" aria-label="Sketch tools">
  <button class="rb w56"><svg class="i"><use href="#sketch"/></svg><span>Sketch</span><i></i></button>
  <button class="rb w54"><svg class="i"><use href="#dim"/></svg><span>Smart<br>Dimension</span><i></i></button>
  <div class="sep"></div>
  <div class="grid">
    <button aria-label="Line"><svg class="i"><use href="#line"/></svg></button><button class="dd" aria-label="Line options"></button>
    <button aria-label="Circle"><svg class="i"><use href="#circle"/></svg></button><button class="dd" aria-label="Circle options"></button>
    <button aria-label="Spline"><svg class="i"><use href="#spline"/></svg></button><button class="dd" aria-label="Spline options"></button>
    <button aria-label="Plane"><svg class="i"><use href="#plane"/></svg></button>
    <button aria-label="Rectangle"><svg class="i"><use href="#rect"/></svg></button><button class="dd" aria-label="Rectangle options"></button>
    <button aria-label="Arc"><svg class="i"><use href="#arc"/></svg></button><button class="dd" aria-label="Arc options"></button>
    <button aria-label="Ellipse"><svg class="i"><use href="#ellipse"/></svg></button><button class="dd" aria-label="Ellipse options"></button>
    <button aria-label="Text"><svg class="i"><use href="#text"/></svg></button>
    <button aria-label="Slot"><svg class="i"><use href="#slot"/></svg></button><button class="dd" aria-label="Slot options"></button>
    <button aria-label="Polygon"><svg class="i"><use href="#hex"/></svg></button><span></span>
    <button aria-label="Fillet"><svg class="i"><use href="#fillet"/></svg></button><button class="dd off" aria-label="Fillet options"></button>
    <button aria-label="Point"><svg class="i"><use href="#point"/></svg></button>
  </div>
  <div class="sep"></div>
  <button class="rb w50 off"><svg class="i"><use href="#trim"/></svg><span><u>T</u>rim<br>Entities</span><i></i></button>
  <button class="rb w48"><svg class="i"><use href="#cube"/></svg><span>Convert<br>Entities</span><i></i></button>
  <button class="rb w50 off"><svg class="i"><use href="#offset"/></svg><span>Offset<br>Entities</span></button>
  <button class="rb w46"><svg class="i"><use href="#surf"/></svg><span>Offset<br>On<br>Surface</span></button>
  <div class="rows">
    <button><svg class="i"><use href="#mirror"/></svg><span>Mirror Entities</span></button>
    <button><svg class="i"><use href="#lpat"/></svg><span>Linear Sketch Pattern</span><i></i></button>
    <button><svg class="i"><use href="#move"/></svg><span>Move Entities</span><i></i></button>
  </div>
  <div class="sep"></div>
  <button class="rb w84 off"><svg class="i"><use href="#rel"/></svg><span>Display/Delete<br>Relations</span><i></i></button>
  <button class="rb w46 off"><svg class="i"><use href="#repair"/></svg><span>Repair<br>Sketch</span></button>
  <div class="sep"></div>
  <button class="rb w42 off"><svg class="i"><use href="#snap"/></svg><span>Quick<br>Snaps</span><i></i></button>
  <div class="sep"></div>
  <button class="rb w46"><svg class="i"><use href="#rapid"/></svg><span>Rapid<br>Sketch</span></button>
  <button class="rb w60 on"><svg class="i"><use href="#instant"/></svg><span>Instant2D</span></button>
  <button class="rb w58 off"><svg class="i"><use href="#shaded"/></svg><span>Shaded<br>Sketch<br>Contours</span></button>
  <button class="rb w48 off"><svg class="i"><use href="#cpat"/></svg><span>Circular<br>Sketch<br>Pattern</span></button>
  <button class="rb w32"><svg class="i"><use href="#line"/></svg><span>Line</span></button>
  <button class="fold" aria-label="Collapse ribbon"><svg class="i16"><use href="#up"/></svg></button>
</section>

<div class="work">
  <div class="center">
    <div class="strip">
      <nav class="tabs"><button class="w60">Features</button><button class="w56 cur">Sketch</button><button class="w60">Surfaces</button><button class="w57">Markup</button><button class="w60">Evaluate</button><button class="w107">MBD Dimensions</button><button class="w133">SOLIDWORKS Add-Ins</button></nav>
      <div class="headsup">
        <button aria-label="Zoom to fit"><svg class="i"><use href="#zoomfit"/></svg></button>
        <button aria-label="Zoom to area"><svg class="i"><use href="#zoomarea"/></svg></button>
        <button aria-label="Previous view"><svg class="i"><use href="#prev"/></svg></button>
        <button aria-label="Section view"><svg class="i"><use href="#section"/></svg></button>
        <button aria-label="View orientation"><svg class="i"><use href="#orient"/></svg></button><button class="dd off" aria-label="Orientation options"></button>
        <button aria-label="Display style"><svg class="i"><use href="#style"/></svg></button><button class="dd off" aria-label="Style options"></button>
        <button aria-label="Hide/Show items"><svg class="i"><use href="#eye"/></svg></button><button class="dd off" aria-label="Hide options"></button>
        <button aria-label="Edit appearance"><svg class="i"><use href="#appear"/></svg></button>
        <button aria-label="Apply scene"><svg class="i"><use href="#scene"/></svg></button><button class="dd off" aria-label="Scene options"></button>
        <button aria-label="View settings"><svg class="i"><use href="#monitor"/></svg></button><button class="dd off" aria-label="View options"></button>
      </div>
      <div class="docbtns"><button aria-label="Previous pane"><svg class="i"><use href="#pl"/></svg></button><button aria-label="Next pane"><svg class="i"><use href="#pr"/></svg></button><button aria-label="Minimize document"><svg class="i"><use href="#min"/></svg></button><button aria-label="Restore document"><svg class="i"><use href="#restore"/></svg></button><button aria-label="Close document"><svg class="i"><use href="#close"/></svg></button></div>
    </div>
    <div class="body">
      <div class="bars">
        <div class="bar">
          <button aria-label="Auto dimension"><svg class="i"><use href="#t1"/></svg></button><button aria-label="Location dimension"><svg class="i"><use href="#t2"/></svg></button><button aria-label="Size dimension"><svg class="i"><use href="#t3"/></svg></button><button aria-label="Pattern dimension"><svg class="i"><use href="#t4"/></svg></button><button aria-label="Datum"><svg class="i"><use href="#t5"/></svg></button><button aria-label="Tolerance"><svg class="i"><use href="#t6"/></svg></button><button aria-label="Tolerance status"><svg class="i"><use href="#t7"/></svg></button>
          <hr><button aria-label="Show annotations"><svg class="i"><use href="#t8"/></svg></button><hr><button aria-label="TolAnalyst"><svg class="i"><use href="#t9"/></svg></button>
        </div>
        <div class="bar">
          <button aria-label="New note"><svg class="i"><use href="#note"/></svg></button><button aria-label="Edit note"><svg class="i"><use href="#noteb"/></svg></button><button aria-label="Insert annotation"><svg class="i"><use href="#notea"/></svg></button><button aria-label="Add remove"><svg class="i"><use href="#notec"/></svg></button><button aria-label="Rebuild block"><svg class="i"><use href="#noted"/></svg></button><button aria-label="Save block"><svg class="i"><use href="#notee"/></svg></button><button aria-label="Explode block"><svg class="i"><use href="#notef"/></svg></button><button aria-label="Belt chain"><svg class="i"><use href="#belt"/></svg></button>
        </div>
        <div class="bar last">
          <button aria-label="Table template"><svg class="i"><use href="#tmpl"/></svg></button><button aria-label="Edit table"><svg class="i"><use href="#tbl"/></svg></button><button aria-label="Edit grid"><svg class="i"><use href="#tbl"/></svg></button><button aria-label="Edit sheet"><svg class="i"><use href="#tbl2"/></svg></button>
        </div>
      </div>
      <div class="right">
        <div class="mid">
          <aside class="panel">
            <div class="grip"><span></span></div>
            <div class="ptabs"><button class="cur" aria-label="FeatureManager"><svg class="i"><use href="#part"/></svg></button><button aria-label="PropertyManager"><svg class="i"><use href="#props"/></svg></button><button aria-label="ConfigurationManager"><svg class="i"><use href="#config"/></svg></button><button aria-label="DimXpertManager"><svg class="i"><use href="#target"/></svg></button><button aria-label="DisplayManager"><svg class="i"><use href="#disp"/></svg></button><button class="more" aria-label="More tabs"><svg class="i16"><use href="#right"/></svg></button></div>
            <label class="filter"><svg class="i"><use href="#filter"/></svg><input type="text" aria-label="Filter tree"></label>
            <ul class="tree">
              <li class="root"><svg class="i"><use href="#part"/></svg><svg class="i"><use href="#grad"/></svg><span>exercice 47shuriken1&nbsp; (Default&lt;&lt;D</span></li>
              <li class="x"><svg class="i"><use href="#hist"/></svg><span>History</span></li>
              <li><svg class="i"><use href="#sensor"/></svg><span>Sensors</span></li>
              <li class="x"><svg class="i"><use href="#annot"/></svg><span>Annotations</span></li>
              <li class="x"><svg class="i"><use href="#solid"/></svg><span>Solid Bodies(1)</span></li>
              <li><svg class="i"><use href="#mat"/></svg><span>Material &lt;not specified&gt;</span></li>
              <li><svg class="i"><use href="#fplane"/></svg><span>Front Plane</span></li>
              <li><svg class="i"><use href="#fplane"/></svg><span>Top Plane</span></li>
              <li><svg class="i"><use href="#fplane"/></svg><span>Right Plane</span></li>
              <li><svg class="i"><use href="#origin"/></svg><span>Origin</span></li>
              <li class="x"><svg class="i"><use href="#boss"/></svg><span>Boss-Extrude1</span></li>
              <li class="x"><svg class="i"><use href="#cut"/></svg><span>Cut-Extrude1</span></li>
              <li><svg class="i"><use href="#cpatc"/></svg><span>CirPattern1</span></li>
              <li><svg class="i"><use href="#chamfer"/></svg><span>Chamfer1</span></li>
              <li><svg class="i"><use href="#chamfer"/></svg><span>Chamfer2</span></li>
            </ul>
            <div class="scroll"><button aria-label="Scroll left"><svg class="i10"><use href="#left"/></svg></button><div class="track"><div class="thumb"></div></div><button aria-label="Scroll right"><svg class="i10"><use href="#right"/></svg></button></div>
            <button class="handle" aria-label="Collapse panel"><span></span></button>
          </aside>
          <main class="view">
            <svg class="model" viewBox="330 139 987 574" role="img" aria-label="Three-bladed shuriken part">
              <g stroke="#000" stroke-width="1.200" stroke-linejoin="round">
                <path d="M588 188L708 204A107 107 0 0 0 893 229L1062 251 989 347A106 106 0 0 0 875 495L770 630 724 519A107 107 0 0 0 652 346z" fill="#696969"/>
                <path d="M566 171L703 189 708 204 588 188zM900 215L1088 240 1062 251 893 229z" fill="#a6a6a6"/>
                <path d="M566 171L588 188 652 346 637 346zM713 530L724 519 770 630 767 658z" fill="#787878"/>
                <path d="M1088 240L1062 251 989 347 1003 351zM882 508L875 495 770 630 767 658z" fill="#9a9a9a"/>
                <circle cx="806.500" cy="356.500" r="33.500" fill="#858585"/><circle cx="806.500" cy="356.500" r="30" fill="#fff"/>
              </g>
              <path d="M370 653.500h20v3h-20z" fill="#d9504c" stroke="#8a1616"/><path d="M390 651l11 4-11 4z" fill="#c81a1a"/>
              <path d="M368.500 657h3v20h-3z" fill="#5aa75a" stroke="#185c18"/><path d="M366 676h8l-4 11z" fill="#14641a"/>
              <text x="365" y="659" class="ax z">Z</text><text x="400" y="659" class="ax x3">X</text><text x="366" y="693" class="ax y">Y</text>
            </svg>
            <nav class="task"><button aria-label="Resources"><svg class="i"><use href="#home"/></svg></button><button aria-label="Design library"><svg class="i"><use href="#lib"/></svg></button><button aria-label="File explorer"><svg class="i"><use href="#fold2"/></svg></button><button aria-label="View palette"><svg class="i"><use href="#palette"/></svg></button><button class="cur" aria-label="Appearances"><svg class="i"><use href="#ball"/></svg></button><button aria-label="Custom properties"><svg class="i"><use href="#props"/></svg></button></nav>
          </main>
        </div>
        <div class="sheets"><div class="nav"><button aria-label="First">|◀</button><button aria-label="Previous">◀</button><button aria-label="Next">▶</button><button aria-label="Last">▶|</button></div><button class="cur">Model</button><button class="ms">Motion Study 1</button></div>
      </div>
    </div>
  </div>
  <aside class="rtool">
    <div class="rlist">
      <button aria-label="Template"><svg class="i"><use href="#tmpl"/></svg></button><span></span>
      <button aria-label="Sketch"><svg class="i"><use href="#sketch"/></svg></button><button class="dd" aria-label="Sketch options"></button>
      <button aria-label="Smart dimension"><svg class="i"><use href="#dim"/></svg></button><button class="dd" aria-label="Dimension options"></button>
      <hr>
      <button aria-label="Line"><svg class="i"><use href="#line"/></svg></button><button class="dd" aria-label="Line options"></button>
      <button aria-label="Rectangle"><svg class="i"><use href="#rect"/></svg></button><button class="dd" aria-label="Rectangle options"></button>
      <button aria-label="Slot"><svg class="i"><use href="#slot"/></svg></button><button class="dd" aria-label="Slot options"></button>
      <button aria-label="Circle"><svg class="i"><use href="#circle"/></svg></button><button class="dd" aria-label="Circle options"></button>
      <button aria-label="Arc"><svg class="i"><use href="#arc"/></svg></button><button class="dd" aria-label="Arc options"></button>
      <button aria-label="Spline"><svg class="i"><use href="#spline"/></svg></button><button class="dd" aria-label="Spline options"></button>
      <button aria-label="Ellipse"><svg class="i"><use href="#ellipse"/></svg></button><button class="dd" aria-label="Ellipse options"></button>
      <button aria-label="Fillet"><svg class="i"><use href="#fillet"/></svg></button><button class="dd off" aria-label="Fillet options"></button>
      <button aria-label="Polygon"><svg class="i"><use href="#hex"/></svg></button><span></span>
      <button aria-label="Point"><svg class="i"><use href="#point"/></svg></button><span></span>
      <button aria-label="Plane"><svg class="i"><use href="#plane"/></svg></button><span></span>
      <button aria-label="Text"><svg class="i"><use href="#text"/></svg></button><span></span>
      <button aria-label="Trim"><svg class="i"><use href="#trim"/></svg></button><button class="dd off" aria-label="Trim options"></button>
      <button aria-label="Convert entities"><svg class="i"><use href="#cube"/></svg></button><button class="dd" aria-label="Convert options"></button>
      <button aria-label="Offset"><svg class="i"><use href="#offset"/></svg></button><span></span>
      <button aria-label="Mirror"><svg class="i"><use href="#mirror"/></svg></button><span></span>
    </div>
    <button class="morebtn" aria-label="More tools"><svg class="i14"><use href="#chev"/></svg></button>
    <div class="rsub"><button aria-label="Dimension"><svg class="i"><use href="#dim"/></svg></button><button aria-label="More"><svg class="i14"><use href="#chev"/></svg></button></div>
  </aside>
</div>

<footer class="taskbar">
  <div class="sys"><button aria-label="Start"><svg class="i24"><use href="#win"/></svg></button><button aria-label="Search"><svg class="i24"><use href="#find"/></svg></button><button aria-label="Task view"><svg class="i24"><use href="#tview"/></svg></button></div>
  <div class="apps"><button aria-label="Cortana"><svg class="i24"><use href="#cortana"/></svg></button><button aria-label="Mail"><svg class="i24"><use href="#mail"/></svg></button><button aria-label="MATLAB"><svg class="i24"><use href="#matlab"/></svg></button><button class="run multi" aria-label="YouTube"><svg class="i24"><use href="#yt"/></svg></button><button class="run" aria-label="Visual Studio Code"><svg class="i24"><use href="#vs"/></svg></button><button class="run" aria-label="Brave"><svg class="i24"><use href="#brave1"/></svg></button><button class="run" aria-label="XAMPP"><svg class="i24"><use href="#xampp"/></svg></button><button class="run" aria-label="Spotify"><svg class="i24"><use href="#spotify"/></svg></button><button class="run" aria-label="Brave profile 2"><svg class="i24"><use href="#brave2"/></svg></button><button class="run multi" aria-label="File Explorer"><svg class="i24"><use href="#files"/></svg></button><button class="run front" aria-label="SOLIDWORKS 2021"><svg class="i24"><use href="#sw"/></svg><span class="year">2021</span></button></div>
  <div class="tray"><button class="wx"><svg class="i24"><use href="#weather"/></svg><span>28°C</span><span>Mostly sunny</span></button><button aria-label="Hidden icons"><svg class="i16"><use href="#up"/></svg></button><button aria-label="Network"><svg class="i"><use href="#wifi"/></svg></button><button aria-label="Battery"><svg class="i"><use href="#batt"/></svg></button><button aria-label="Volume"><svg class="i"><use href="#vol"/></svg></button><button class="lang">ENG</button><button class="clock">10:22 AM<br>7/1/2023</button><button class="act" aria-label="Notifications"><svg class="i"><use href="#action"/></svg></button></div>
</footer>
</body>
</html>
```
FILE: styles.css
```css
* { box-sizing: border-box; }
body {
  margin: 0;
  height: 100vh;
  display: flex;
  flex-direction: column;
  overflow: hidden;
  background: #f7f7f7;
  color: #000;
  font: 11px/13px "Noto Sans", "Open Sans", sans-serif;
}
button, input { font: inherit; color: inherit; background: none; border: 0; padding: 0; margin: 0; }
button { display: flex; align-items: center; justify-content: center; flex: none; }
svg { display: block; flex: none; }
hr { border: 0; margin: 0; height: 1px; background: #808080; }
.defs { position: absolute; width: 0; height: 0; }
.i { width: 20px; height: 20px; }
.i10 { width: 10px; height: 10px; }
.i14 { width: 14px; height: 14px; }
.i16 { width: 16px; height: 16px; }
.i24 { width: 24px; height: 24px; }
.dim { color: #888; }
.sep { width: 1px; background: #c4c4c4; }

.dd { width: 14px; align-self: stretch; }
.dd::after, .rb i, .rows i {
  content: "";
  border: 3px solid transparent;
  border-top-color: #333;
  border-bottom: 0;
}
.dd.off::after, .off i, .rows i { border-top-color: #999; }

.titlebar { display: flex; align-items: center; height: 35px; border-top: 1px solid #808080; border-bottom: 1px solid #808080; flex: none; }
.logo { display: flex; align-items: center; gap: 3px; width: 135px; padding-left: 4px; color: #d9291c; font: italic 14px/20px "Open Sans", sans-serif; }
.logo b { font-weight: 800; }
.ds { width: 22px; height: 22px; }
.menu { display: flex; gap: 17px; padding-left: 8px; font-size: 12px; }
.menu { gap: 15px; }
.pin { width: 33px; padding-left: 5px; }
.quick { display: flex; align-items: center; height: 33px; border-left: 1px solid #c4c4c4; padding-left: 16px; margin-left: auto; }
.qb { width: 30px; height: 30px; }
.quick .dd { height: 30px; }
.picked { background: #b0b0b0; border: 1px solid #777; }
.boxed { border: 1px solid #888; border-left: 0; }
.doc { width: 100px; padding-left: 5px; white-space: nowrap; }
.searchbox { display: flex; align-items: center; width: 202px; height: 23px; border: 1px solid #b5b5b5; background: #fff; padding-left: 2px; }
.searchbox input { flex: 1; min-width: 0; padding-left: 4px; }
.searchbox input::placeholder { color: #666; opacity: 1; }
.winbtns { display: flex; width: 189px; padding-left: 3px; color: #333; }
.winbtns button { width: 36px; }

.ribbon { display: flex; height: 82px; padding-bottom: 2px; border-bottom: 1px solid #808080; flex: none; }
.rb { flex-direction: column; justify-content: flex-start; padding: 6px 0 8px; height: 79px; }
.rb span { white-space: nowrap; }
.rb i { margin-top: auto; }
.off, .rows { color: #b3b3b3; }
.on { background: #b0b0b0; border: 1px solid #777; padding-top: 5px; }
.w32 { width: 32px; } .w42 { width: 42px; } .w46 { width: 46px; } .w48 { width: 48px; }
.w50 { width: 50px; } .w54 { width: 54px; } .w56 { width: 56px; } .w57 { width: 57px; }
.w58 { width: 58px; } .w60 { width: 60px; } .w84 { width: 84px; }
.w107 { width: 107px; } .w133 { width: 133px; }
.ribbon > .w54 { margin-right: 6px; }
.grid { display: grid; grid-template-columns: 26px 14px 26px 14px 26px 14px 26px; grid-auto-rows: 26px; padding: 1px 1px 0 1px; }
.rows { width: 176px; padding: 1px 0 0 2px; }
.rows button { width: 100%; height: 26px; justify-content: flex-start; gap: 7px; }
.rows i { margin-left: auto; margin-right: 6px; }
.fold { margin: auto 6px 4px auto; }

.work { display: flex; flex: 1; min-height: 0; }
.center { flex: 1; display: flex; flex-direction: column; min-width: 0; background: #fff; }
.strip { display: flex; align-items: flex-start; height: 22px; flex: none; }
.tabs { display: flex; height: 22px; border-bottom: 1px solid #808080; font-size: 11px; }
.tabs button { background: #d2d2d2; border-right: 1px solid #808080; height: 21px; white-space: nowrap; }
.tabs .cur { background: #f7f7f7; font-weight: bold; color: #333; height: 22px; }
.headsup, .docbtns { display: flex; padding-top: 5px; position: relative; z-index: 1; }
.headsup { margin-left: 123px; }
.headsup button { width: 26px; }
.headsup .dd { width: 14px; }
.docbtns { margin-left: auto; padding-right: 6px; color: #999; }
.docbtns button { width: 26px; }

.body { display: flex; flex: 1; min-height: 0; }
.bars { display: flex; align-items: flex-start; background: #f7f7f7; width: 101px; flex: none; }
.bar { width: 34px; padding: 13px 0 7px; border-right: 1px solid #808080; border-bottom: 1px solid #808080; background: radial-gradient(circle, #888 1px, transparent 1px) 0 1px / 3px 4px repeat-x; }
.bar button { width: 32px; height: 26px; }
.bar hr { margin: 2px 3px 4px 5px; }
.bar.last { border-right: 0; width: 33px; }
.right { flex: 1; display: flex; flex-direction: column; min-width: 0; }
.mid { flex: 1; display: flex; min-height: 0; }
.panel { position: relative; width: 229px; flex: none; display: flex; flex-direction: column; background: #f7f7f7; border-right: 1px solid #808080; padding-right: 2px; }
.grip { height: 16px; margin-top: 4px; border-top: 1px solid #aaa; border-bottom: 1px solid #b5b5b5; display: flex; align-items: center; justify-content: center; }
.grip span, .handle span { width: 6px; height: 6px; border-radius: 50%; border: 1px solid #888; background: #ccc; }
.ptabs { display: flex; margin-top: 4px; height: 26px; border-bottom: 1px solid #aaa; }
.ptabs button { width: 40px; border: 1px solid #808080; border-left: 0; background: #d2d2d2; }
.ptabs .cur { background: #f7f7f7; border-bottom: 0; width: 41px; }
.ptabs .more { width: 27px; border: 0; background: none; }
.filter { display: flex; align-items: center; height: 26px; margin: 0 3px 0 4px; border: 1px solid #c4c4c4; }
.filter input { flex: 1; min-width: 0; }
.tree { list-style: none; margin: 0; padding: 0; border-left: 1px solid #c4c4c4; border-bottom: 3px solid #3b8fc9; overflow: hidden; }
.tree li { display: flex; align-items: center; height: 22px; padding-left: 24px; white-space: nowrap; gap: 4px; }
.tree .root { padding-left: 2px; gap: 3px; }
.tree .x { padding-left: 8px; }
.tree .x::before { content: ""; border: 4px solid transparent; border-left: 5px solid #555; border-right: 0; margin-right: 7px; }
.scroll { display: flex; margin-top: auto; margin-bottom: 6px; height: 16px; background: #eee; }
.scroll button { width: 17px; color: #444; }
.track { flex: 1; display: flex; }
.thumb { width: 66%; background: #cbcbcb; }
.handle { position: absolute; left: 100%; top: 256px; width: 9px; height: 39px; background: #f7f7f7; border: 1px solid #808080; border-left: 0; }
.view { position: relative; flex: 1; min-width: 0; }
.model { width: 100%; height: 100%; }
.ax { font: 10px "Liberation Sans", sans-serif; }
.z { fill: #00c; } .x3 { fill: #d00; } .y { fill: #070; }
.task { position: absolute; right: 0; top: 29px; border: 1px solid #808080; border-right: 0; }
.task button { width: 24px; height: 24px; background: #d2d2d2; border-bottom: 1px solid #808080; }
.task button:last-child { border-bottom: 0; height: 23px; }
.task .cur { background: #fff; }
.sheets { display: flex; height: 15px; background: #f7f7f7; border-top: 1px solid #808080; flex: none; }
.sheets .nav { display: flex; width: 66px; padding-left: 1px; }
.nav button { width: 16px; background: #a9abad; border: 1px solid #888; color: #7a7a7a; font: 8px/10px "DejaVu Sans", sans-serif; }
.sheets > .cur { width: 56px; padding-left: 3px; font-weight: bold; }
.sheets > button { padding-bottom: 1px; }
.ms { width: 108px; padding-right: 8px; background: #d2d2d2; border: 1px solid #808080; border-top: 0; border-bottom: 0; }

.rtool { width: 49px; display: flex; flex-direction: column; flex: none; background: #f7f7f7; border-left: 1px solid #c4c4c4; }
.rlist { display: grid; grid-template-columns: 32px 10px; grid-template-rows: 26px 26px 26px 8px; grid-auto-rows: 26px; padding: 13px 0 0 2px; background: radial-gradient(circle, #888 1px, transparent 1px) 0 3px / 3px 4px repeat-x; }
.rlist .dd { width: 10px; }
.rlist hr { grid-column: 1 / -1; align-self: start; margin-top: 2px; }
.morebtn { margin: auto 0 6px 18px; width: 14px; }
.rsub { width: 35px; margin-left: 1px; height: 63px; margin-bottom: 2px; border: 1px solid #808080; border-left: 0; padding-top: 16px; background: radial-gradient(circle, #888 1px, transparent 1px) 0 3px / 3px 4px repeat-x; }
.rsub button { width: 32px; }

.taskbar { display: flex; height: 40px; flex: none; background: linear-gradient(90deg, #332823 0%, #322624 12%, #302624 22%, #3a332f 27%, #263639 34%, #243438 48%, #212d33 60%, #1f262e 75%, #22262e 88%, #40302a 97%, #3c2b25 100%); color: #fff; }
.sys, .apps, .tray { display: flex; }
.sys button, .apps button { width: 48px; height: 40px; }
.apps { gap: 1px; padding-left: 3px; }
.apps .run { background: linear-gradient(#76b9ed, #76b9ed) center bottom / 40px 2px no-repeat; }
.apps .multi { background: linear-gradient(90deg, #76b9ed 80%, #4f7ea5 80%) center bottom / 40px 2px no-repeat; }
.apps .front { position: relative; background-color: #4e5a5f; background-size: 48px 2px; }
.swtxt { font: bold 12px "Liberation Sans", sans-serif; fill: #fff; }
.year { position: absolute; left: 17px; top: 21px; font: bold 8px/12px "Open Sans", sans-serif; color: #fff; text-shadow: 0 0 2px #000, 0 0 2px #000; }
.tray { margin-left: auto; border-right: 1px solid #777; margin-right: 4px; }
.tray button { width: 23px; }
.tray .wx { width: auto; gap: 8px; padding-right: 19px; font-size: 13px; }
.tray .wx + button { margin-right: 3px; }
.tray .lang { width: 38px; font-size: 12px; }
.tray .clock { width: 64px; line-height: 18px; display: block; text-align: center; }
.tray .act { width: 47px; padding-right: 10px; }
```
